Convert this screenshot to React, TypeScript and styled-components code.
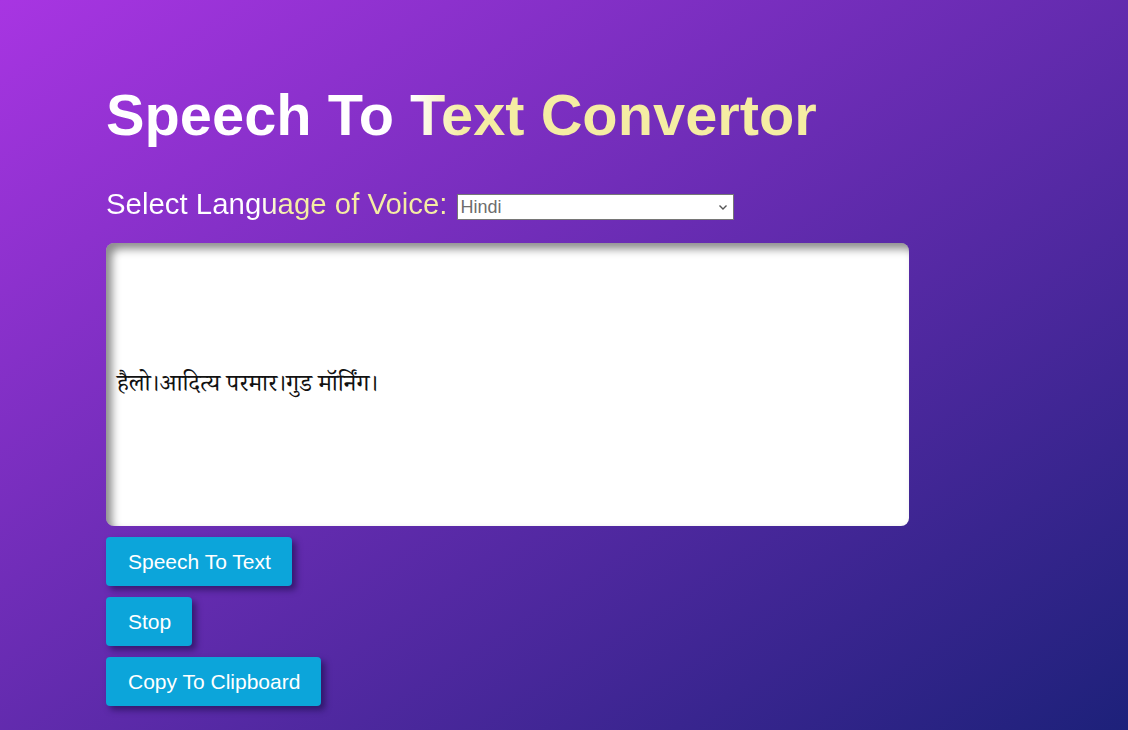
import React, { useState } from "react";
import styled, { createGlobalStyle } from "styled-components";

const GlobalStyle = createGlobalStyle`
  html, body {
    margin: 0;
    padding: 0;
  }
  body {
    font-family: "Liberation Sans", Arial, sans-serif;
  }
`;

const Page = styled.main`
  min-height: 100vh;
  box-sizing: border-box;
  padding: 82px 0 24px 106px;
  background: linear-gradient(to bottom right, #a835e2, #1d217a);
  display: flex;
  flex-direction: column;
  align-items: flex-start;
`;

const Title = styled.h1`
  margin: 0;
  font-size: 57.8px;
  font-weight: 700;
  line-height: normal;
  display: inline-block;
  background: linear-gradient(to right, #ffffff 43%, #f5eda3 50%);
  -webkit-background-clip: text;
  background-clip: text;
  color: transparent;
`;

const LanguageRow = styled.div`
  margin-top: 39px;
  font-size: 29.4px;
  line-height: normal;
`;

const LanguageLabel = styled.label`
  display: inline-block;
  background: linear-gradient(to right, #ffffff 45%, #f5eda3 53%);
  -webkit-background-clip: text;
  background-clip: text;
  color: transparent;
`;

const SelectWrap = styled.span`
  position: relative;
  display: inline-flex;
  margin-left: 9px;
  vertical-align: 1px;
`;

const LanguageSelect = styled.select`
  appearance: none;
  -webkit-appearance: none;
  width: 277px;
  height: 26px;
  box-sizing: border-box;
  margin: 0;
  padding: 0 20px 0 3px;
  border: 1px solid #767676;
  border-radius: 0;
  background: #ffffff;
  color: #6d6d6d;
  font-family: "Liberation Sans", Arial, sans-serif;
  font-size: 18px;
  outline: none;
`;

const Chevron = styled.svg`
  position: absolute;
  right: 6px;
  top: 8px;
  width: 10px;
  height: 10px;
  pointer-events: none;
`;

const TextBox = styled.textarea`
  margin-top: 22px;
  width: 803px;
  height: 283px;
  box-sizing: border-box;
  padding: 128px 10px 10px 11px;
  border: none;
  border-radius: 8px;
  background: #ffffff;
  box-shadow: inset 6px 6px 9px rgba(0, 0, 0, 0.45);
  resize: none;
  outline: none;
  color: #111111;
  font-family: "Noto Serif Devanagari", "Noto Sans Devanagari", "Lohit Devanagari", serif;
  font-size: 24.5px;
  line-height: 32px;
`;

const Actions = styled.div`
  margin-top: 11px;
  display: flex;
  flex-direction: column;
  align-items: flex-start;
  gap: 11px;
`;

const ActionButton = styled.button`
  border: none;
  border-radius: 4px;
  padding: 13px 21px 13px 22px;
  background: #0ca5da;
  color: #ffffff;
  font-family: "Liberation Sans", Arial, sans-serif;
  font-size: 21px;
  line-height: 23px;
  cursor: pointer;
  box-shadow: 4px 4px 6px rgba(20, 10, 60, 0.55);
`;

const languages = ["Hindi", "English", "Gujarati", "Marathi", "Bengali", "Tamil", "Telugu"];

export default function App() {
  const [lang, setLang] = useState("Hindi");
  const [text, setText] = useState("हैलो।आदित्य परमार।गुड मॉर्निंग।");

  return (
    <>
      <GlobalStyle />
      <Page>
        <Title>Speech To Text Convertor</Title>
        <LanguageRow>
          <LanguageLabel htmlFor="lang">Select Language of Voice:</LanguageLabel>
          <SelectWrap>
            <LanguageSelect id="lang" value={lang} onChange={(e) => setLang(e.target.value)}>
              {languages.map((l) => (
                <option key={l} value={l}>
                  {l}
                </option>
              ))}
            </LanguageSelect>
            <Chevron viewBox="0 0 10 10">
              <path d="M1.5 3.5 L5 7 L8.5 3.5" fill="none" stroke="#555" strokeWidth="1.4" />
            </Chevron>
          </SelectWrap>
        </LanguageRow>
        <TextBox value={text} onChange={(e) => setText(e.target.value)} />
        <Actions>
          <ActionButton>Speech To Text</ActionButton>
          <ActionButton>Stop</ActionButton>
          <ActionButton>Copy To Clipboard</ActionButton>
        </Actions>
      </Page>
    </>
  );
}
